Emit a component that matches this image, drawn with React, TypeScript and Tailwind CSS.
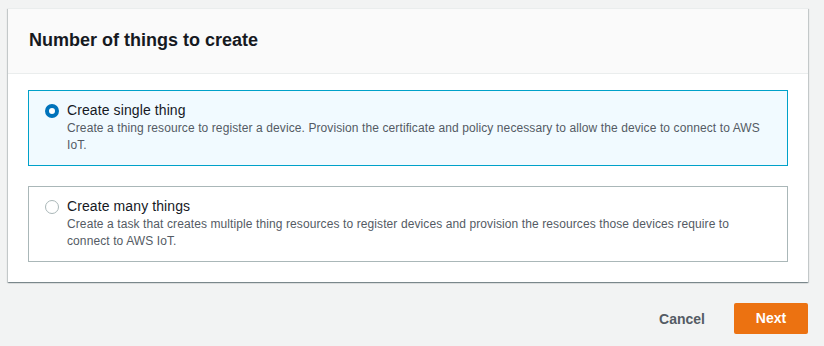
import { useState } from 'react';

type Option = {
  id: string;
  title: string;
  description: string;
};

const options: Option[] = [
  {
    id: 'single',
    title: 'Create single thing',
    description:
      'Create a thing resource to register a device. Provision the certificate and policy necessary to allow the device to connect to AWS IoT.',
  },
  {
    id: 'many',
    title: 'Create many things',
    description:
      'Create a task that creates multiple thing resources to register devices and provision the resources those devices require to connect to AWS IoT.',
  },
];

function Radio({ checked }: { checked: boolean }) {
  return checked ? (
    <span className="mt-[3px] block h-[14px] w-[14px] shrink-0 rounded-full border-[4px] border-[#0073bb] bg-white" />
  ) : (
    <span className="mt-[3px] block h-[14px] w-[14px] shrink-0 rounded-full border border-[#aab7b8] bg-white" />
  );
}

export default function App() {
  const [selected, setSelected] = useState('single');

  return (
    <div className="min-h-[346px] w-full bg-[#f2f3f3] px-2 pt-2 font-['Liberation_Sans',Arial,sans-serif]">
      <div className="w-[800px] bg-white shadow-[0_1px_1px_0_rgba(0,28,36,0.3),1px_1px_1px_0_rgba(0,28,36,0.15),-1px_1px_1px_0_rgba(0,28,36,0.15)] border-t border-[#eaeded]">
        <div className="h-[65px] border-b border-[#eaeded] bg-[#fafafa] px-[21px] pt-[20px]">
          <h2 className="text-[18px] font-bold leading-[22px] text-[#16191f]">
            Number of things to create
          </h2>
        </div>

        <div className="flex flex-col gap-[20px] px-5 pt-[16px] pb-[20px]">
          {options.map((o) => {
            const checked = selected === o.id;
            return (
              <button
                key={o.id}
                onClick={() => setSelected(o.id)}
                className={
                  checked
                    ? 'flex h-[76px] gap-[8px] border border-[#00a1c9] bg-[#f1faff] pl-[16px] pr-5 pt-[10px] text-left'
                    : 'flex h-[76px] gap-[8px] border border-[#aab7b8] bg-white pl-[16px] pr-5 pt-[10px] text-left'
                }
              >
                <Radio checked={checked} />
                <div>
                  <div className="text-[14px] leading-[19px] tracking-[0.1px] text-[#16191f]">{o.title}</div>
                  <div className="text-[12px] leading-[17px] tracking-[0.1px] text-[#545b64]">
                    {o.description}
                  </div>
                </div>
              </button>
            );
          })}
        </div>
      </div>

      <div className="flex w-[800px] items-center justify-end gap-[29px] pt-[21px]">
        <button className="pt-[2px] text-[14px] font-bold text-[#545b64]">Cancel</button>
        <button className="h-[31px] w-[74px] rounded-[2px] bg-[#ec7211] text-[14px] font-bold text-white">
          Next
        </button>
      </div>
    </div>
  );
}
